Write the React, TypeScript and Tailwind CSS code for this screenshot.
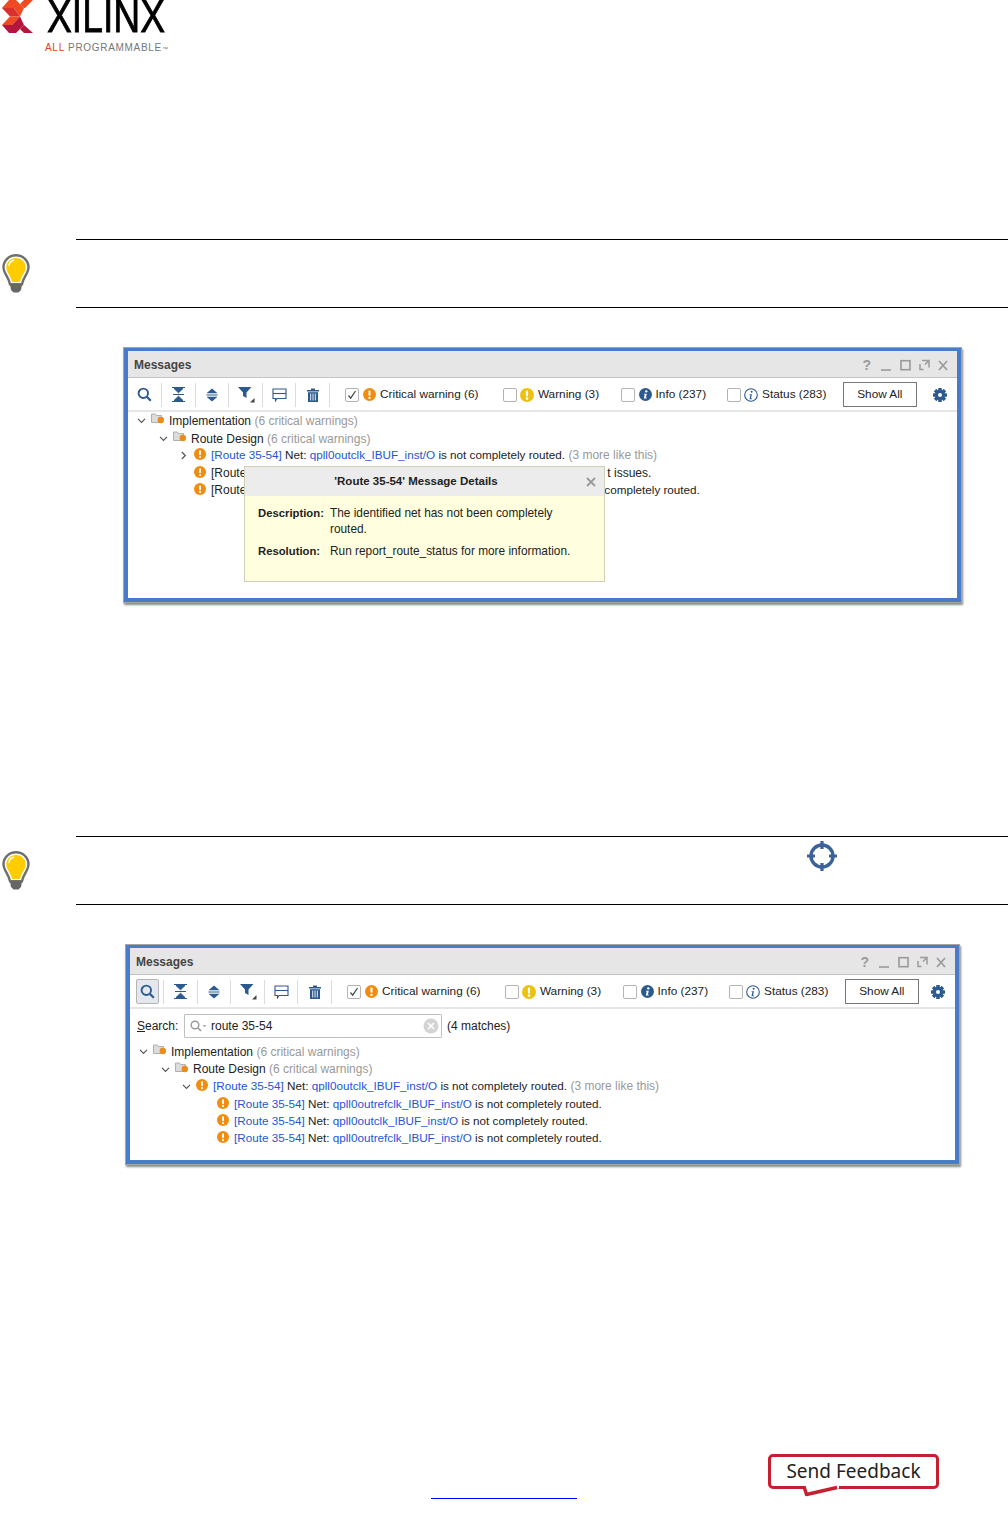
import React from "react";

const B = "#2c5a8f";

function Warn({ color = "#f28c0f", size = 13 }: { color?: string; size?: number }) {
  return (
    <svg width={size} height={size} viewBox="0 0 14 14" className="shrink-0">
      <circle cx="7" cy="7" r="7" fill={color} />
      <rect x="5.9" y="2.6" width="2.2" height="5.8" rx="1" fill="#fff" />
      <circle cx="7" cy="10.6" r="1.3" fill="#fff" />
    </svg>
  );
}
function InfoFill() {
  return (
    <svg width="13" height="13" viewBox="0 0 14 14" className="shrink-0">
      <circle cx="7" cy="7" r="7" fill={B} />
      <circle cx="7.8" cy="3.6" r="1.3" fill="#fff" />
      <path d="M5.4 6.2h3l-1 4.2h1.2l-.3 1H5.2l1-4.3H5.2z" fill="#fff" />
    </svg>
  );
}
function InfoLine() {
  return (
    <svg width="14" height="14" viewBox="0 0 14 14" className="shrink-0">
      <circle cx="7" cy="7" r="6.3" fill="none" stroke={B} strokeWidth="1.1" />
      <circle cx="7.6" cy="3.8" r="1" fill={B} />
      <path d="M5.6 6.2h2.3l-.9 4.2h1.1l-.2.8H5.500l.9-4.200h-1z" fill={B} />
    </svg>
  );
}
function Chevron({ down = true }: { down?: boolean }) {
  return (
    <svg width="9" height="9" viewBox="0 0 9 9" className="shrink-0">
      <path d={down ? "M1 2.8l3.5 3.5L8 2.8" : "M2.8 1l3.5 3.5L2.8 8"} fill="none" stroke="#555" strokeWidth="1.2" />
    </svg>
  );
}
function Folder() {
  return (
    <svg width="14" height="12" viewBox="0 0 14 12" className="shrink-0 -mt-[3px]">
      <path d="M0.5 1h4l1 1.500h5v7h-10z" fill="#dcdcdc" stroke="#b0b0b0" strokeWidth="1" />
      <circle cx="9.8" cy="7" r="3.2" fill="#ee8a17" />
    </svg>
  );
}
function SearchIcon() {
  return (
    <svg width="15" height="15" viewBox="0 0 15 15">
      <circle cx="6.3" cy="6.3" r="4.7" fill="none" stroke={B} strokeWidth="1.9" />
      <path d="M9.8 9.8l4 4" stroke={B} strokeWidth="2.2" />
    </svg>
  );
}
function CollapseIcon() {
  return (
    <svg width="13" height="15" viewBox="0 0 13 15">
      <path d="M0 0.500h13M2 1.500l4.500 4.300L11 1.500z" stroke={B} strokeWidth="1" fill={B} />
      <path d="M1 7.500h11" stroke={B} strokeWidth="1" />
      <path d="M2 13.500l4.500-4.300L11 13.500zM0 14.500h13" stroke={B} strokeWidth="1" fill={B} />
    </svg>
  );
}
function ExpandIcon() {
  return (
    <svg width="12" height="14" viewBox="0 0 12 14">
      <path d="M6 0.500L11.500 5.300H0.500z" fill={B} />
      <path d="M0.500 7h11" stroke={B} strokeWidth="1" />
      <path d="M6 13.500L11.500 8.700H0.500z" fill={B} />
    </svg>
  );
}
function FilterIcon() {
  return (
    <svg width="17" height="17" viewBox="0 0 17 17" className="ml-[2px]">
      <path d="M0 1h13.500L8.500 6.500V12L5 10V6.500z" fill={B} />
      <path d="M16.500 12v4.500H12z" fill="#444" />
    </svg>
  );
}
function CommentIcon() {
  return (
    <svg width="15" height="14" viewBox="0 0 15 14">
      <path d="M1 1h13v9.500H5L3.500 12.800V10.500H1z" fill="none" stroke={B} strokeWidth="1.100" />
      <path d="M1 5.500h13" stroke={B} strokeWidth="1.100" />
    </svg>
  );
}
function TrashIcon() {
  return (
    <svg width="12" height="14" viewBox="0 0 12 14">
      <path d="M0 2h12v1.400H0zM4 .4h4v1.600H4z" fill={B} />
      <path d="M1 4.200h10V14H1z" fill={B} />
      <path d="M3.700 5.500v7M6 5.500v7M8.300 5.500v7" stroke="#fff" strokeWidth="0.900" />
    </svg>
  );
}
function Gear() {
  const teeth = [0, 45, 90, 135];
  return (
    <svg width="14" height="14" viewBox="0 0 14 14">
      {teeth.map((a) => (
        <rect key={a} x="5.200" y="0" width="3.600" height="14" rx="0.600" fill={B} transform={`rotate(${a} 7 7)`} />
      ))}
      <circle cx="7" cy="7" r="5" fill={B} />
      <circle cx="7" cy="7" r="2" fill="#fff" />
    </svg>
  );
}
function CheckBox({ checked = false }: { checked?: boolean }) {
  return (
    <span className="relative flex h-[14px] w-[14px] shrink-0 items-center justify-center rounded-[2px] border border-[#b4b4b4] bg-white">
      {checked && (
        <svg width="10" height="10" viewBox="0 0 10 10">
          <path d="M1.500 5.500l2.200 2.700L8.500 1" fill="none" stroke="#444" strokeWidth="1.200" />
        </svg>
      )}
    </span>
  );
}
function Bulb() {
  return (
    <svg width="28" height="39" viewBox="0 0 28 39">
      <path d="M14 1.300C6.800 1.300 1.500 6.600 1.500 13.200c0 6 5.200 9.800 6.500 17h12c1.300-7.200 6.500-11 6.500-17C26.500 6.600 21.200 1.300 14 1.300z" fill="#fff" stroke="#6f6f6f" strokeWidth="2.400" />
      <path d="M14 4C8.500 4 4.300 8 4.300 13.300c0 5.200 4.400 8.200 5.700 14.700h8c1.300-6.500 5.700-9.500 5.700-14.700C23.700 8 19.500 4 14 4z" fill="#ffcc00" />
      <path d="M7 11.500c.4-2.700 2-4.500 4.600-5.200" fill="none" stroke="#fff" strokeWidth="1.400" strokeLinecap="round" />
      <path d="M8 30.500h12l-1 5.500-2.500 2.500h-5L9 36z" fill="#666" />
    </svg>
  );
}
function Tip({ children }: { children?: React.ReactNode }) {
  return (
    <div className="flex items-start">
      <div className="w-[76px] shrink-0 pl-[2px] pt-[15px]">
        <Bulb />
      </div>
      <div className="relative h-[69px] flex-1 border-y border-black">{children}</div>
    </div>
  );
}

function Filter({ box, icon, label, className, labelClass = "" }: { box?: boolean; icon: React.ReactNode; label: string; className: string; labelClass?: string }) {
  return (
    <div className={`flex items-center ${className}`}>
      <CheckBox checked={box} />
      {icon}
      <span className={`whitespace-nowrap text-[11.8px] ${labelClass}`}>{label}</span>
    </div>
  );
}
function Tool({ children, active = false }: { children: React.ReactNode; active?: boolean }) {
  return (
    <div className="flex h-[24px] w-[33.6px] shrink-0 items-center justify-center border-r border-[#dcdcdc]">
      <span className={`flex items-center justify-center ${active ? "ml-[1px] h-[25px] w-[23px] rounded-[2px] border border-[#b5b5b5] bg-[#e4e8ee]" : ""}`}>
        {children}
      </span>
    </div>
  );
}

function Msg({ net }: { net: string }) {
  return (
    <span className="whitespace-nowrap text-[11.7px]">
      <span className="text-[#2356d6]">[Route 35-54]</span> Net: <span className="text-[#2356d6]">{net}</span> is not completely routed.
    </span>
  );
}

function Row({ className, children }: { className: string; children: React.ReactNode }) {
  return <div className={`flex h-[17.35px] items-center whitespace-nowrap ${className}`}>{children}</div>;
}

function Window({ className, search = false, children }: { className: string; search?: boolean; children: React.ReactNode }) {
  return (
    <div className={`relative flex flex-col border border-[#a5a5a5] shadow-[1px_2px_2px_#8a8a8a] ${className}`}>
      <div className="flex flex-1 flex-col border-x-[4px] border-b-[4px] border-t-[3px] border-[#4a7bc8] bg-white font-['Liberation_Sans',sans-serif] text-[12px] text-[#222]">
        <div className="flex h-[27px] shrink-0 items-center justify-between border-b border-[#c4c4c4] bg-[#e6e6e6] pl-[6px] pr-[8px] pt-[1px]">
          <span className="font-bold text-[#444]">Messages</span>
          <div className="flex items-center gap-[10px]">
            <span className="font-bold text-[14px] leading-[14px] text-[#9a9a9a]">?</span>
            <svg width="68" height="12" viewBox="19 0 68 12" fill="none" stroke="#9a9a9a">
              <path d="M19 11h10" strokeWidth="1.600" />
              <rect x="39" y="1.700" width="9" height="9" strokeWidth="1.600" />
              <path d="M60 1.500h7v7M66 2.500l-3 3M58 5v5.500h3.500" strokeWidth="1.500" />
              <path d="M77 2l8 9M85 2l-8 9" strokeWidth="1.700" />
            </svg>
          </div>
        </div>
        <div className="flex h-[34px] shrink-0 items-center border-b-2 border-[#e6e6e6] pl-[0.500px] pr-[10px] pt-[1px]">
          <Tool active={search}><SearchIcon /></Tool>
          <Tool><CollapseIcon /></Tool>
          <Tool><ExpandIcon /></Tool>
          <Tool><FilterIcon /></Tool>
          <Tool><CommentIcon /></Tool>
          <Tool><TrashIcon /></Tool>
          <Filter box className="ml-[15px] gap-[4px]" icon={<Warn />} label="Critical warning (6)" />
          <Filter className="ml-[24.500px] gap-[3px]" labelClass="ml-[1px]" icon={<Warn size={14} color="#ecc10f" />} label="Warning (3)" />
          <Filter className="ml-[21.500px] gap-[4px]" icon={<InfoFill />} label="Info (237)" />
          <Filter className="ml-[20.500px] gap-[3px]" labelClass="ml-[1.500px]" icon={<InfoLine />} label="Status (283)" />
          <div className="ml-[16.500px] flex h-[25px] w-[74px] shrink-0 items-center justify-center border border-[#777] text-[11.8px]">Show All</div>
          <div className="ml-auto flex"><Gear /></div>
        </div>
        {children}
      </div>
    </div>
  );
}

function Logo() {
  return (
    <div className="flex h-[52px] items-start">
      <svg width="34" height="34" viewBox="0 0 34 34" className="shrink-0">
        <path d="M2 8L9 0h7l8 8z" fill="#f04a23" />
        <path d="M24 0h9l-8 8h-1l-4-4z" fill="#f04a23" />
        <path d="M2 8h12l6 8.500H10z" fill="#d8302f" />
        <path d="M14 8h10l-4 8.500z" fill="#f04a23" />
        <path d="M2 25l8-8.500h10L12 25z" fill="#f04a23" />
        <path d="M12 25l8-8.500 4 8.500z" fill="#b5173c" />
        <path d="M2 25h22l-8 8H9z" fill="#b5173c" />
        <path d="M24 25l9 8h-9l-4-4z" fill="#b5173c" />
      </svg>
      <div className="ml-[13px] flex flex-col">
        <div className="h-[33px] w-[145px] origin-top-left scale-x-[0.81] whitespace-nowrap font-['Liberation_Sans',sans-serif] text-[46px] leading-[33px] text-black [-webkit-text-stroke:0.8px_black]">XILINX</div>
        <div className="mt-[9px] -ml-[2px] whitespace-nowrap font-['Liberation_Sans',sans-serif] text-[10px] leading-[11px] tracking-[0.7px] text-[#777]">
          <span className="text-[#e2402c]">ALL</span> PROGRAMMABLE<span className="text-[6px]">™</span>
        </div>
      </div>
    </div>
  );
}

export default function App() {
  return (
    <div className="flex h-[1526px] w-[1008px] flex-col overflow-hidden bg-white">
      <Logo />
      <div className="mt-[187px]"><Tip /></div>

      <Window className="ml-[123px] mt-[39px] h-[256px] w-[839px]">
        <div className="relative flex-1">
          <Row className="pl-[9px]"><Chevron /><span className="ml-[5px]"><Folder /></span><span className="ml-[4px]">Implementation <span className="text-[#999]">(6 critical warnings)</span></span></Row>
          <Row className="pl-[31px] pt-[1px]"><Chevron /><span className="ml-[4.500px]"><Folder /></span><span className="ml-[4.500px]">Route Design <span className="text-[#999]">(6 critical warnings)</span></span></Row>
          <Row className="pl-[51px]"><Chevron down={false} /><span className="ml-[5.500px] -mt-[2px]"><Warn size={12} /></span><span className="ml-[5.500px]"><Msg net="qpll0outclk_IBUF_inst/O" /> <span className="text-[#999]">(3 more like this)</span></span></Row>
          <Row className="pl-[66px]"><span className="-mt-[2px]"><Warn size={12} /></span><span className="ml-[5px] text-[#222]">[Route</span><span className="ml-[361px]">t issues.</span></Row>
          <Row className="pl-[66px]"><span className="-mt-[2px]"><Warn size={12} /></span><span className="ml-[5px] text-[#222]">[Route</span><span className="ml-[358px] text-[11.7px]">completely routed.</span></Row>
          <div className="absolute left-[116px] top-[54px] flex h-[116px] w-[361px] flex-col border border-[#cfcfb8] bg-[#ffffdf]">
            <div className="relative flex h-[29px] shrink-0 items-center justify-center pr-[17px] bg-[#ececec] text-[11.500px] font-bold text-[#222]">
              'Route 35-54' Message Details
              <svg width="10" height="10" viewBox="0 0 10 10" className="absolute right-[8px] top-[10px]">
                <path d="M1 1l8 8M9 1l-8 8" stroke="#999" strokeWidth="1.800" />
              </svg>
            </div>
            <div className="grid grid-cols-[72px_1fr] gap-y-[7px] pl-[13px] pr-[28px] pt-[10px] text-[11.850px] leading-[15.500px]">
              <span className="text-[11.300px] font-bold">Description:</span>
              <span>The identified net has not been completely routed.</span>
              <span className="text-[11.300px] font-bold">Resolution:</span>
              <span className="whitespace-nowrap">Run report_route_status for more information.</span>
            </div>
          </div>
        </div>
      </Window>

      <div className="mt-[233px]">
        <Tip>
          <svg width="32" height="32" viewBox="0 0 32 32" className="absolute left-[730px] top-[3px] blur-[0.5px]">
            <circle cx="16" cy="16" r="11" fill="none" stroke="#3a6299" strokeWidth="3.400" />
            <path d="M16 1v8M16 23v8M1 16h8M23 16h8" stroke="#3a6299" strokeWidth="3.200" />
          </svg>
        </Tip>
      </div>

      <Window search className="ml-[125px] mt-[39px] h-[221px] w-[835px]">
        <div className="flex h-[33px] shrink-0 items-center pl-[7px]">
          <span className="w-[47px]"><span className="underline">S</span>earch:</span>
          <div className="flex h-[24px] w-[258px] items-center rounded-[1px] border border-[#c0c0c0] pl-[5px] pr-[2px]">
            <svg width="18" height="12" viewBox="0 0 18 12" fill="none" className="shrink-0">
              <circle cx="5" cy="5" r="3.800" stroke="#999" strokeWidth="1.400" />
              <path d="M8 8l3 3" stroke="#999" strokeWidth="1.600" />
              <path d="M12.500 5h4l-2 2.200z" fill="#aaa" />
            </svg>
            <span className="ml-[3px] flex-1">route 35-54</span>
            <svg width="16" height="16" viewBox="0 0 16 16" className="shrink-0">
              <circle cx="8" cy="8" r="7.500" fill="#d4d4d4" />
              <path d="M5 5l6 6M11 5l-6 6" stroke="#fff" strokeWidth="1.600" />
            </svg>
          </div>
          <span className="ml-[5px]">(4 matches)</span>
        </div>
        <div className="flex-1 pt-[1px]">
          <Row className="pl-[9px]"><Chevron /><span className="ml-[5px]"><Folder /></span><span className="ml-[4px]">Implementation <span className="text-[#999]">(6 critical warnings)</span></span></Row>
          <Row className="pl-[31px]"><Chevron /><span className="ml-[4.500px]"><Folder /></span><span className="ml-[4.500px]">Route Design <span className="text-[#999]">(6 critical warnings)</span></span></Row>
          <Row className="pl-[51.500px]"><Chevron /><span className="ml-[5px] -mt-[2px]"><Warn size={12} /></span><span className="ml-[5.500px]"><Msg net="qpll0outclk_IBUF_inst/O" /> <span className="text-[#999]">(3 more like this)</span></span></Row>
          <Row className="pl-[87px]"><span className="-mt-[2px]"><Warn size={12} /></span><span className="ml-[5px]"><Msg net="qpll0outrefclk_IBUF_inst/O" /></span></Row>
          <Row className="pl-[87px]"><span className="-mt-[2px]"><Warn size={12} /></span><span className="ml-[5px]"><Msg net="qpll0outclk_IBUF_inst/O" /></span></Row>
          <Row className="pl-[87px]"><span className="-mt-[2px]"><Warn size={12} /></span><span className="ml-[5px]"><Msg net="qpll0outrefclk_IBUF_inst/O" /></span></Row>
        </div>
      </Window>

      <div className="mt-[289px] flex items-start pl-[431px]">
        <div className="mt-[44px] h-[1px] w-[146px] bg-[#0000ff]" />
        <div className="relative ml-[191px] flex h-[35px] w-[171px] items-center justify-center rounded-[5px] border-[3.500px] border-[#c4202f] font-['Noto_Sans',sans-serif] text-[19px] leading-none text-[#222]">
          Send Feedback
          <svg width="42" height="15" viewBox="0 0 42 15" className="absolute left-[30px] top-[27px]">
            <path d="M4 0H38V4.500L6 10z" fill="#fff" />
            <path d="M3 2.500L5.500 10.500L36 3.500" fill="none" stroke="#c4202f" strokeWidth="3.400" strokeLinejoin="round" />
          </svg>
        </div>
      </div>
    </div>
  );
}
